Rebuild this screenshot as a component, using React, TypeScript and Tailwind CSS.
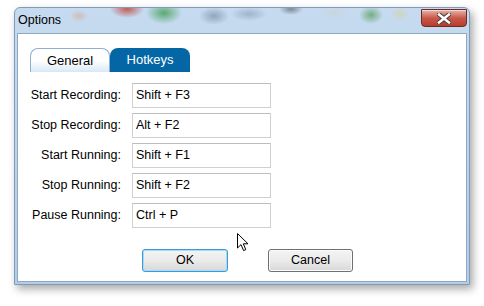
const font = { fontFamily: '"Liberation Sans", Arial, sans-serif' };

const hotkeys = [
  { label: "Start Recording:", value: "Shift + F3" },
  { label: "Stop Recording:", value: "Alt + F2" },
  { label: "Start Running:", value: "Shift + F1" },
  { label: "Stop Running:", value: "Shift + F2" },
  { label: "Pause Running:", value: "Ctrl + P" },
];

const CloseButton = () => (
  <div className="w-[46px] h-[18px] mt-[1px] mr-[2px] rounded-b-[4px] border border-[#6b2b22] bg-gradient-to-b from-[#e8b3a8] via-[#c8584a] to-[#b73c2c] flex items-center justify-center shadow-[inset_0_1px_0_rgba(255,255,255,0.5)]">
    <svg width="14" height="11" viewBox="0 0 14 11">
      <path d="M2 1.5 L12 9.5 M12 1.5 L2 9.5" stroke="#4b3b3b" strokeWidth="4.5" strokeLinecap="square" />
      <path d="M2 1.5 L12 9.5 M12 1.5 L2 9.5" stroke="#ffffff" strokeWidth="2.5" strokeLinecap="square" />
    </svg>
  </div>
);

// aero glass: blurred shapes of whatever sits behind the window
const TitleBar = () => (
  <div className="h-[25px] flex items-start justify-between rounded-t-[6px] bg-[radial-gradient(9px_6px_at_64px_8px,rgba(217,164,140,0.55),transparent),radial-gradient(17px_9px_at_112px_1px,rgba(192,70,60,0.85),transparent),radial-gradient(18px_11px_at_149px_5px,rgba(63,155,82,0.8),transparent),radial-gradient(15px_9px_at_199px_8px,rgba(124,142,166,0.7),transparent),radial-gradient(18px_7px_at_234px_6px,rgba(142,162,189,0.7),transparent),radial-gradient(12px_6px_at_276px_1px,rgba(93,102,112,0.7),transparent),radial-gradient(15px_7px_at_319px_5px,rgba(201,211,220,0.7),transparent),radial-gradient(12px_9px_at_356px_7px,rgba(78,154,85,0.7),transparent),radial-gradient(9px_7px_at_385px_6px,rgba(216,207,160,0.6),transparent)]">
    <span className="ml-[3px] mt-[5px] text-[12.5px] leading-[15px] text-black">Options</span>
    <CloseButton />
  </div>
);

const Tabs = () => (
  <div className="flex ml-[12px] mt-[14px]">
    <div className="w-[80px] h-[24px] rounded-t-[8px] border border-b-0 border-[#8db0d0] bg-gradient-to-b from-white via-white to-[#d9e8f5] flex items-center justify-center text-[13px] text-black">
      General
    </div>
    <div className="w-[80px] h-[24px] rounded-t-[8px] bg-[#0566a6] flex items-center justify-center text-[13px] text-white">
      Hotkeys
    </div>
  </div>
);

const HotkeyRow = ({ label, value }: { label: string; value: string }) => (
  <div className="flex items-center h-[25px]">
    <div className="w-[103px] text-right text-[12.5px] text-black">{label}</div>
    <div className="ml-[11px] w-[139px] h-[25px] border border-[#d0d0d0] border-t-[#bdbdbd] bg-white pl-[3px] pt-[4px] text-[12.5px] leading-[15px] text-black">
      {value}
    </div>
  </div>
);

const DialogButton = ({ label, primary }: { label: string; primary?: boolean }) => (
  <div
    className={`h-[23px] rounded-[3px] border flex items-center justify-center text-[12.5px] text-black bg-gradient-to-b from-[#f4f4f4] via-[#ebebeb] to-[#d8d8d8] ${
      primary
        ? "w-[86px] border-[#3c9ad6] shadow-[inset_0_0_0_1px_#a6dcf7]"
        : "w-[85px] border-[#707070] shadow-[inset_0_0_0_1px_#fbfbfb]"
    }`}
  >
    {label}
  </div>
);

const Cursor = () => (
  <svg className="absolute left-[236px] top-[232px]" width="14" height="21" viewBox="0 0 14 21">
    <path
      d="M1.5 1.5 L1.5 16 L5 12.6 L7.6 18.6 L9.8 17.6 L7.3 11.8 L12 11.8 Z"
      fill="#ffffff"
      stroke="#000000"
      strokeWidth="1"
      strokeLinejoin="miter"
    />
  </svg>
);

export default function App() {
  return (
    <div className="relative w-[484px] h-[306px] bg-white pl-[14px] pt-[7px]" style={font}>
      <div className="w-[456px] h-[278px] flex flex-col rounded-t-[6px] border border-[#7f9bbb] bg-gradient-to-b from-[#c6dbef] via-[#bcd3ea] to-[#b3cce8] shadow-[3px_4px_8px_rgba(0,0,0,0.35)]">
        <TitleBar />
        <div className="flex-1 mx-[2px] mb-[2px] border border-[#8ea8c6] bg-white flex flex-col">
          <Tabs />
          <div className="flex flex-col gap-[5px] mt-[11px]">
            {hotkeys.map((h) => (
              <HotkeyRow key={h.label} label={h.label} value={h.value} />
            ))}
          </div>
          <div className="flex gap-[40px] ml-[124px] mt-[21px]">
            <DialogButton label="OK" primary />
            <DialogButton label="Cancel" />
          </div>
        </div>
      </div>
      <Cursor />
    </div>
  );
}
